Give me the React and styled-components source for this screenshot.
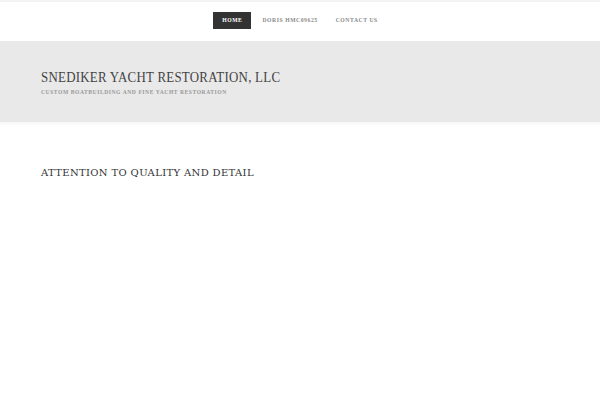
import React from "react";
import styled, { createGlobalStyle } from "styled-components";

const Global = createGlobalStyle`
  html, body { margin: 0; padding: 0; background: #fff; }
  body { font-family: "Liberation Serif", "DejaVu Serif", serif; }
`;

const Page = styled.div`
  width: 600px;
  min-height: 400px;
  background: #fff;
`;

const TopBar = styled.nav`
  height: 41px;
  border-top: 2px solid #f3f3f3;
  box-sizing: border-box;
  display: flex;
  justify-content: center;
  align-items: flex-start;
  padding-top: 10px;
`;

const NavItem = styled.a`
  display: block;
  height: 17px;
  line-height: 17px;
  padding: 0 9px;
  margin-right: ${(p) => (p.$active ? "2px" : "0")};
  font-family: "Liberation Serif", serif;
  font-size: 5.7px;
  font-weight: bold;
  letter-spacing: 0.55px;
  text-transform: uppercase;
  color: ${(p) => (p.$active ? "#fff" : "#8a8a8a")};
  background: ${(p) => (p.$active ? "#333" : "transparent")};
  text-decoration: none;
`;

const Header = styled.header`
  background: #e9e9e9;
  height: 81px;
  box-sizing: border-box;
  padding: 28px 41px 0;
  box-shadow: 0 2px 3px rgba(0, 0, 0, 0.04);
`;

const SiteTitle = styled.h1`
  margin: 0;
  font-family: "Liberation Serif", serif;
  font-weight: normal;
  font-size: 15px;
  line-height: 17px;
  letter-spacing: 0.3px;
  color: #444;
  text-transform: uppercase;
  transform: scaleX(0.86);
  transform-origin: left;
  white-space: nowrap;
`;

const Tagline = styled.p`
  margin: 3px 0 0;
  font-family: "Liberation Serif", serif;
  font-weight: bold;
  font-size: 5.6px;
  line-height: 7px;
  letter-spacing: 0.55px;
  color: #999;
  text-transform: uppercase;
`;

const Main = styled.main`
  padding: 45px 41px 0;
`;

const SectionTitle = styled.h2`
  margin: 0;
  font-family: "DejaVu Serif", serif;
  font-weight: normal;
  font-size: 10px;
  line-height: 12px;
  letter-spacing: 0.35px;
  color: #333;
  text-transform: uppercase;
`;

export default function App() {
  return (
    <Page>
      <Global />
      <TopBar>
        <NavItem $active href="#">Home</NavItem>
        <NavItem href="#">Doris HMC09625</NavItem>
        <NavItem href="#">Contact Us</NavItem>
      </TopBar>
      <Header>
        <SiteTitle>Snediker Yacht Restoration, LLC</SiteTitle>
        <Tagline>Custom Boatbuilding and Fine Yacht Restoration</Tagline>
      </Header>
      <Main>
        <SectionTitle>Attention to Quality and Detail</SectionTitle>
      </Main>
    </Page>
  );
}
